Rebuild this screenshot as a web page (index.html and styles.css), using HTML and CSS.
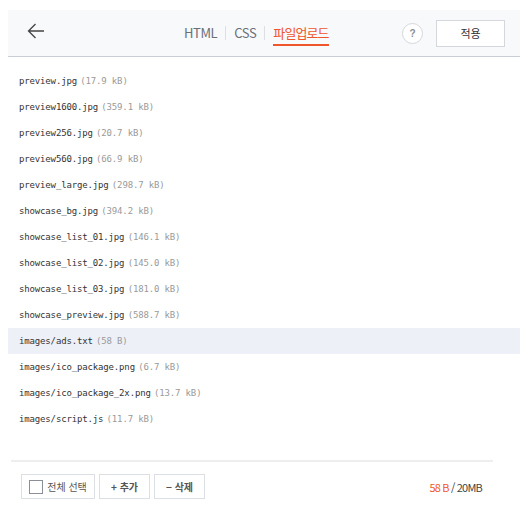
FILE: index.html
```html
<!DOCTYPE html>
<html lang="ko">
<head>
  <meta charset="UTF-8">
  <title>파일업로드</title>
  <link rel="stylesheet" href="styles.css">
</head>
<body>
<div class="panel">
  <!-- Header -->
  <div class="header">
    <button class="back" type="button" aria-label="뒤로">
      <svg width="18" height="16" viewBox="0 0 18 16"><path d="M17 8H1.5M8.5 1L1.5 8l7 7" fill="none" stroke="#444" stroke-width="1.3"/></svg>
    </button>
    <div class="tabs">
      <span class="tab">HTML</span>
      <span class="sep"></span>
      <span class="tab">CSS</span>
      <span class="sep"></span>
      <span class="tab active">파일업로드</span>
    </div>
    <div class="actions">
      <span class="help">?</span>
      <button class="apply" type="button">적용</button>
    </div>
  </div>

  <!-- File list -->
  <ul class="files">
    <li>preview.jpg <span class="size">(17.9 kB)</span></li>
    <li>preview1600.jpg <span class="size">(359.1 kB)</span></li>
    <li>preview256.jpg <span class="size">(20.7 kB)</span></li>
    <li>preview560.jpg <span class="size">(66.9 kB)</span></li>
    <li>preview_large.jpg <span class="size">(298.7 kB)</span></li>
    <li>showcase_bg.jpg <span class="size">(394.2 kB)</span></li>
    <li>showcase_list_01.jpg <span class="size">(146.1 kB)</span></li>
    <li>showcase_list_02.jpg <span class="size">(145.0 kB)</span></li>
    <li>showcase_list_03.jpg <span class="size">(181.0 kB)</span></li>
    <li>showcase_preview.jpg <span class="size">(588.7 kB)</span></li>
    <li class="selected">images/ads.txt <span class="size">(58 B)</span></li>
    <li>images/ico_package.png <span class="size">(6.7 kB)</span></li>
    <li>images/ico_package_2x.png <span class="size">(13.7 kB)</span></li>
    <li>images/script.js <span class="size">(11.7 kB)</span></li>
  </ul>

  <!-- Footer -->
  <div class="footer">
    <div class="buttons">
      <button class="btn check" type="button"><span class="box"></span>전체 선택</button>
      <button class="btn" type="button">+ 추가</button>
      <button class="btn" type="button">− 삭제</button>
    </div>
    <div class="quota"><span class="used">58 B</span> / 20MB</div>
  </div>
</div>
</body>
</html>
```

FILE: styles.css
```css
body {
  margin: 0;
  padding: 10px 11px 0 8px;
  font-family: "Noto Sans CJK KR", "Noto Sans", sans-serif;
  background: #fff;
}
.panel {
  width: 512px;
}
.header {
  display: flex;
  align-items: center;
  height: 46px;
  background: #f8f9fb;
  border-bottom: 1px solid #c9ced6;
}
.back {
  border: 0;
  background: none;
  padding: 0;
  margin-left: 19px;
  width: 18px;
  height: 16px;
  display: flex;
  margin-top: -5px;
}
.tabs {
  display: flex;
  align-items: center;
  margin-left: 139px;
  height: 46px;
}
.tab {
  font-size: 13px;
  color: #6b6f78;
  line-height: 46px;
  letter-spacing: -0.4px;
  position: relative;
}
.tab.active {
  color: #f0562b;
  letter-spacing: -0.9px;
}
.tab.active::after {
  content: "";
  position: absolute;
  left: 0;
  right: 0;
  bottom: 10px;
  height: 2px;
  background: #f0562b;
}
.sep {
  width: 1px;
  height: 14px;
  background: #dcdfe4;
  margin: 0 8px;
}
.actions {
  display: flex;
  align-items: center;
  margin-left: auto;
  margin-right: 15px;
}
.help {
  width: 19px;
  height: 19px;
  border: 1px solid #d4d7dc;
  border-radius: 50%;
  background: #fff;
  font-family: "Liberation Sans", sans-serif;
  font-size: 10px;
  font-weight: bold;
  color: #8a8e96;
  display: flex;
  align-items: center;
  justify-content: center;
  margin-right: 13px;
}
.apply {
  width: 69px;
  height: 27px;
  border: 1px solid #d4d7dc;
  background: #fff;
  font-family: "Noto Sans CJK KR", sans-serif;
  font-size: 11px;
  color: #333;
  padding: 0;
}
.files {
  list-style: none;
  margin: 0;
  padding: 11px 0 0;
  height: 392px;
}
.files li {
  height: 26px;
  line-height: 26px;
  padding-left: 11px;
  font-family: "DejaVu Sans Mono", monospace;
  font-size: 9px;
  letter-spacing: -0.15px;
  color: #333;
}
.files li.selected {
  background: #eef0f7;
}
.size {
  color: #9a9a9a;
  margin-left: -2px;
}
.footer {
  margin: 0 27px 0 3px;
  border-top: 2px solid #eceef0;
  display: flex;
  align-items: center;
  justify-content: space-between;
  padding-top: 12px;
}
.buttons {
  display: flex;
  gap: 4px;
  margin-left: 10px;
}
.btn {
  width: 51px;
  height: 25px;
  border: 1px solid #dcdfe3;
  background: #fff;
  font-family: "Noto Sans CJK KR", sans-serif;
  font-size: 10px;
  font-weight: bold;
  color: #555;
  padding: 0;
  display: flex;
  align-items: center;
  justify-content: center;
}
.btn.check {
  width: 74px;
  font-weight: normal;
}
.box {
  width: 12px;
  height: 12px;
  border: 1px solid #8a8e96;
  margin-right: 4px;
  background: #fff;
}
.quota {
  font-family: "Noto Sans CJK KR", sans-serif;
  font-size: 11px;
  color: #444;
  letter-spacing: -0.8px;
  margin-right: 11px;
}
.used {
  color: #f0562b;
}
```
